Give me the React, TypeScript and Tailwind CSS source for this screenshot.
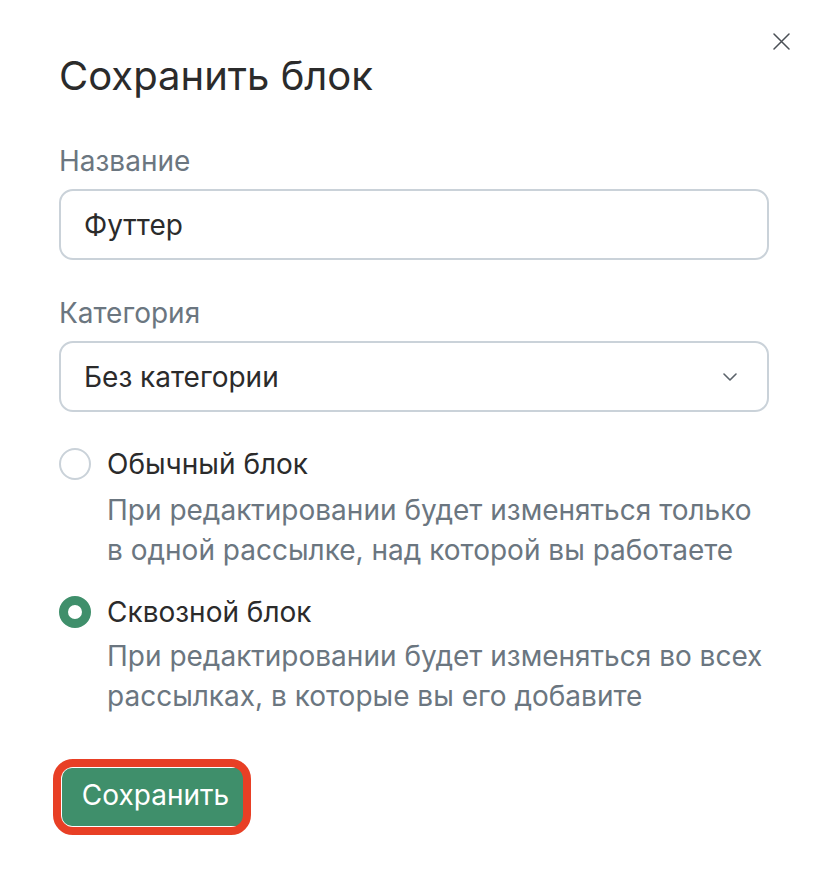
import React from "react";

export default function App() {
  return (
    <div className="w-[822px] h-[884px] bg-white relative" style={{ fontFamily: "Inter, 'Noto Sans', sans-serif" }}>
      <button className="absolute left-[773px] top-[33px] w-[17px] h-[17px] text-[#4a4f55]">
        <svg viewBox="0 0 17 17" width="17" height="17" fill="none" stroke="currentColor" strokeWidth="1.5" strokeLinecap="round">
          <path d="M1 1L16 16M16 1L1 16" />
        </svg>
      </button>
      <div className="pl-[59px] pr-[53px] pt-[50px] flex flex-col">
        <h1 className="text-[40px] leading-[52px] text-[#2b2b2b] font-normal">Сохранить блок</h1>
        <label className="mt-[41px] text-[28px] leading-[36px] text-[#6b7680]">Название</label>
        <div className="mt-[10px] h-[71px] border-[2px] border-[#cad2d9] rounded-[14px] flex items-center px-[23px] text-[28px] text-[#2b2b2b]">
          Футтер
        </div>
        <label className="mt-[35px] text-[28px] leading-[36px] text-[#6b7680]">Категория</label>
        <div className="mt-[10px] h-[71px] border-[2px] border-[#cad2d9] rounded-[14px] flex items-center justify-between pl-[23px] pr-[30px] text-[28px] text-[#2b2b2b]">
          <span>Без категории</span>
          <svg viewBox="0 0 14 8" width="14" height="8" fill="none" stroke="#5b636b" strokeWidth="1.6" strokeLinecap="round" strokeLinejoin="round">
            <path d="M1 1L7 7L13 1" />
          </svg>
        </div>
        <div className="mt-[32px] flex gap-[16px]">
          <div className="w-[32px] h-[32px] rounded-full border-[2px] border-[#cad2d9] shrink-0 mt-[4px]" />
          <div className="flex flex-col">
            <div className="text-[28px] leading-[40px] text-[#2b2b2b]">Обычный блок</div>
            <div className="mt-[6px] text-[28px] leading-[40px] text-[#6b7680]">
              При редактировании будет изменяться только<br />в одной рассылке, над которой вы работаете
            </div>
          </div>
        </div>
        <div className="mt-[22px] flex gap-[16px]">
          <div className="w-[32px] h-[32px] rounded-full border-[9.5px] border-[#3f8f6b] shrink-0 mt-[4px]" />
          <div className="flex flex-col">
            <div className="text-[28px] leading-[40px] text-[#2b2b2b]">Сквозной блок</div>
            <div className="mt-[4px] text-[28px] leading-[40px] text-[#6b7680]">
              При редактировании будет изменяться во всех<br />рассылках, в которые вы его добавите
            </div>
          </div>
        </div>
        <div className="mt-[52px] self-start relative ml-[3px]">
          <button className="h-[58px] w-[187px] pb-[5px] rounded-[10px] bg-[#3f8f6b] text-white text-[28px] flex items-center justify-center">Сохранить</button>
          <div className="absolute left-[-9px] top-[-9px] w-[198px] h-[76px] rounded-[20px] border-[8px] border-[#e83f25]" />
        </div>
      </div>
    </div>
  );
}
